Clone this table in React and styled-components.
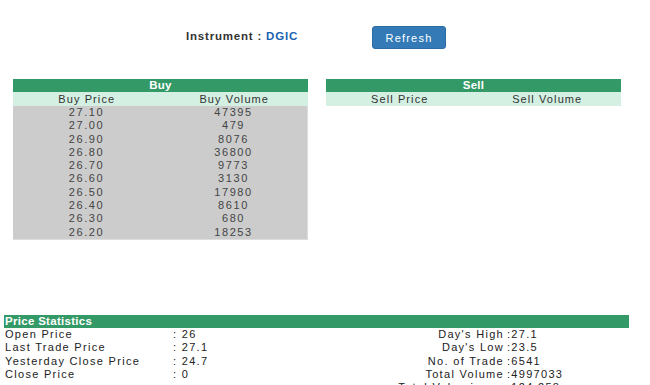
import React from 'react';
import styled, { createGlobalStyle } from 'styled-components';

const GlobalStyle = createGlobalStyle`
    body {
        margin: 0;
        background: #fff;
        font-family: "Liberation Sans", Arial, sans-serif;
        font-size: 11px;
        color: #333;
    }
`;

const Page = styled.div`
    width: 650px;
    height: 385px;
    overflow: hidden;
`;

const Toolbar = styled.div`
    display: flex;
    align-items: center;
    height: 23px;
    padding: 26px 0 30px 186px;
    gap: 66px;
`;

const Instrument = styled.div`
    font-weight: bold;
    font-size: 11.5px;
    letter-spacing: 0.8px;
    color: #333;
    width: 120px;
    white-space: nowrap;
    margin-top: -3px;
`;

const Code = styled.span`
    color: #1a63b0;
`;

const RefreshButton = styled.button`
    width: 74px;
    height: 23px;
    border: 1px solid #2e6da4;
    border-radius: 3px;
    background: #337ab7;
    color: #fff;
    font-family: "Liberation Sans", Arial, sans-serif;
    font-size: 11px;
    letter-spacing: 1.2px;
    padding: 0;
`;

const Books = styled.div`
    display: flex;
    gap: 18px;
    padding-left: 13px;
`;

const Book = styled.div`
    width: 295px;
`;

const BookTitle = styled.div`
    height: 13px;
    line-height: 13px;
    background: #339966;
    color: #fff;
    font-weight: bold;
    font-size: 11.5px;
    text-align: center;
    letter-spacing: 0.3px;
`;

const Row = styled.div`
    display: grid;
    grid-template-columns: 1fr 1fr;
    height: ${(p) => (p.head ? '14px' : '13.3px')};
    line-height: ${(p) => (p.head ? '14px' : '13.3px')};
    background: ${(p) => (p.head ? '#d3f0e2' : '#cccccc')};
    color: ${(p) => (p.head ? '#333' : '#444')};
    text-align: center;
    letter-spacing: ${(p) => (p.head ? '1.1px' : '1.6px')};
`;

const Body = styled.div`
    border-right: 1px solid #ddd;
    border-bottom: 1px solid #ddd;
`;

const Stats = styled.div`
    margin: 75px 0 0 4px;
    width: 625px;
`;

const StatsTitle = styled.div`
    height: 13px;
    line-height: 13px;
    background: #339966;
    color: #fff;
    font-weight: bold;
    font-size: 11.5px;
    padding-left: 1px;
    letter-spacing: 0.3px;
`;

const StatRow = styled.div`
    display: grid;
    grid-template-columns: 169px 90px 241px 1fr;
    height: 13.3px;
    line-height: 13.3px;
    color: #222;
    letter-spacing: 1.3px;
`;

const Label = styled.div`
    padding-left: 1px;
    white-space: nowrap;
    text-align: ${(p) => (p.right ? 'right' : 'left')};
`;

const Value = styled.div`
    padding-left: ${(p) => (p.gap ? '3px' : '0')};
    white-space: nowrap;
`;

const buy = [
    ['27.10', '47395'],
    ['27.00', '479'],
    ['26.90', '8076'],
    ['26.80', '36800'],
    ['26.70', '9773'],
    ['26.60', '3130'],
    ['26.50', '17980'],
    ['26.40', '8610'],
    ['26.30', '680'],
    ['26.20', '18253']
];

const stats = [
    ['Open Price', ': 26', "Day's High", ':27.1'],
    ['Last Trade Price', ': 27.1', "Day's Low", ':23.5'],
    ['Yesterday Close Price', ': 24.7', 'No. of Trade', ':6541'],
    ['Close Price', ': 0', 'Total Volume', ':4997033'],
    ['', '', 'Total Value in mn', ':124.258']
];

const App = () => {
    return (
        <>
            <GlobalStyle />
            <Page>
                <Toolbar>
                    <Instrument>
                        Instrument : <Code>DGIC</Code>
                    </Instrument>
                    <RefreshButton>Refresh</RefreshButton>
                </Toolbar>
                <Books>
                    <Book>
                        <BookTitle>Buy</BookTitle>
                        <Row head>
                            <div>Buy Price</div>
                            <div>Buy Volume</div>
                        </Row>
                        <Body>
                            {buy.map(([price, volume]) => (
                                <Row key={price}>
                                    <div>{price}</div>
                                    <div>{volume}</div>
                                </Row>
                            ))}
                        </Body>
                    </Book>
                    <Book>
                        <BookTitle>Sell</BookTitle>
                        <Row head>
                            <div>Sell Price</div>
                            <div>Sell Volume</div>
                        </Row>
                    </Book>
                </Books>
                <Stats>
                    <StatsTitle>Price Statistics</StatsTitle>
                    {stats.map(([l1, v1, l2, v2]) => (
                        <StatRow key={l2}>
                            <Label>{l1}</Label>
                            <Value>{v1}</Value>
                            <Label right>{l2}</Label>
                            <Value gap>{v2}</Value>
                        </StatRow>
                    ))}
                </Stats>
            </Page>
        </>
    );
};

export default App;
